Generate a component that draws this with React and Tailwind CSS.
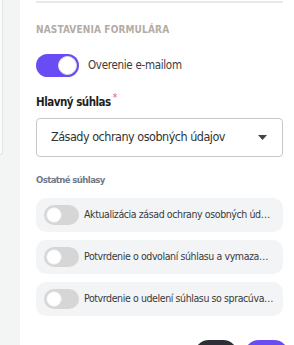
import React, { useState } from "react";

const font = { fontFamily: '"DejaVu Sans Condensed", "Roboto", sans-serif' };

const Toggle = ({ on, onChange, size = "lg" }) => {
  const big = size === "lg";
  return (
    <button
      onClick={onChange}
      className={`relative shrink-0 rounded-full transition-colors ${
        big ? "w-[43px] h-[23px]" : "w-[35px] h-[20px]"
      } ${on ? "bg-[#6a4cf5]" : "bg-[#d6d6d6]"}`}
    >
      <span
        className={`absolute top-[2px] rounded-full bg-white border border-[#e2e2e2] ${
          big ? "w-[19px] h-[19px]" : "w-[16px] h-[16px]"
        } ${on ? (big ? "left-[22px]" : "left-[17px]") : "left-[2px]"}`}
      />
    </button>
  );
};

const consents = [
  "Aktualizácia zásad ochrany osobných údajov",
  "Potvrdenie o odvolaní súhlasu a vymazaní údajov",
  "Potvrdenie o udelení súhlasu so spracúvaním údajov",
];

export default function App() {
  const [verify, setVerify] = useState(true);
  const [others, setOthers] = useState([false, false, false]);

  return (
    <div className="flex w-[294px] h-[345px] overflow-hidden bg-white" style={font}>
      {/* left gutter */}
      <div className="w-[20px] shrink-0 bg-[#f3f4f4] flex">
        <div className="w-[3px] h-[155px] bg-[#fafafa] border-r border-b border-[#e4e4e4] rounded-br-[3px]" />
      </div>

      <div className="flex-1 min-w-0 pl-[16px] pr-[11px]">
        <div className="h-[2px] mt-[1px] bg-[#e8e8e8]" />

        <div className="mt-[19px] text-[10px] font-bold tracking-[0.15px] text-[#b3aca4] uppercase">
          Nastavenia formulára
        </div>

        <div className="mt-[17px] flex items-center gap-[9px]">
          <Toggle on={verify} onChange={() => setVerify(!verify)} />
          <span className="text-[11.5px] tracking-[-0.3px] text-[#3a3a3a]">Overenie e-mailom</span>
        </div>

        <div className="mt-[17px] flex items-start">
          <span className="text-[11.5px] tracking-[-0.5px] font-bold text-[#1f1f1f]">Hlavný súhlas</span>
          <span className="text-[10px] text-[#f0457a] ml-[2px] -mt-[4px]">*</span>
        </div>

        <div className="mt-[7px] h-[39px] border border-[#c8c8c8] rounded-[4px] flex items-center pl-[14px] pr-[15px]">
          <span className="flex-1 min-w-0 truncate text-[12.5px] tracking-[-0.5px] text-[#333]">
            Zásady ochrany osobných údajov
          </span>
          <svg width="9" height="5" viewBox="0 0 9 5" className="shrink-0">
            <path d="M0 0h9L4.5 5z" fill="#444" />
          </svg>
        </div>

        <div className="mt-[16px] text-[9.5px] tracking-[-0.6px] font-bold text-[#6f7a8a]">Ostatné súhlasy</div>

        <div className="mt-[10px] flex flex-col gap-[8px]">
          {consents.map((c, i) => (
            <div key={i} className="h-[34px] bg-[#f3f4f6] rounded-[10px] flex items-center pl-[8px] pr-[9px] gap-[5px]">
              <Toggle
                size="sm"
                on={others[i]}
                onChange={() => setOthers(others.map((v, j) => (j === i ? !v : v)))}
              />
              <span className="min-w-0 text-[10.5px] tracking-[-0.4px] text-[#3a3a3a] truncate">{c}</span>
            </div>
          ))}
        </div>

        <div className="mt-[24px] flex justify-end gap-[6px]">
          <button className="w-[44px] h-[30px] rounded-full bg-[#2d2f36]" />
          <button className="w-[45px] h-[30px] rounded-full bg-[#6a4cf5] -mr-[6px]" />
        </div>
      </div>
    </div>
  );
}
